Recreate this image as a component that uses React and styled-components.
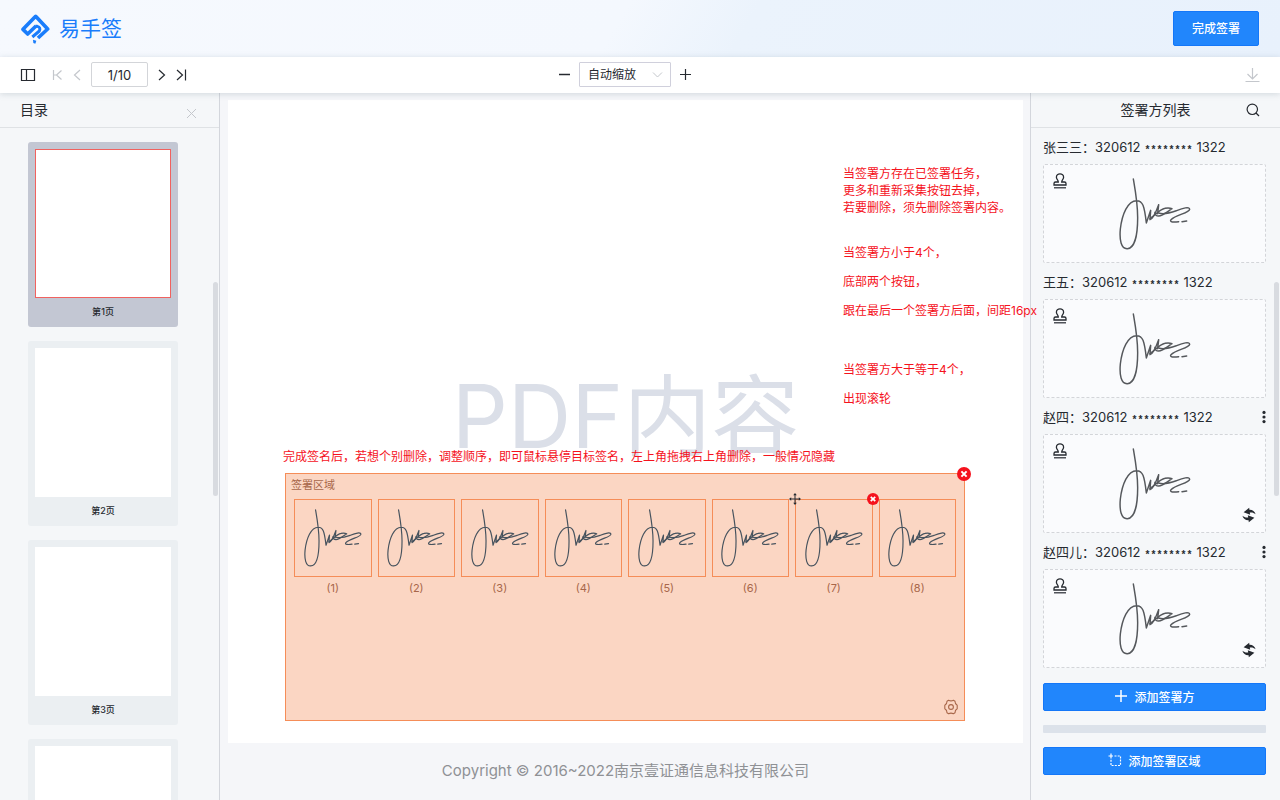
import React from 'react';
import styled, { createGlobalStyle, css } from 'styled-components';

const pages = [1, 2, 3, 4];

const signers = [
  { name: '张三三', locked: true },
  { name: '王五', locked: true },
  { name: '赵四', locked: false },
  { name: '赵四儿', locked: false },
];

const signatures = [1, 2, 3, 4, 5, 6, 7, 8];

const GlobalStyle = createGlobalStyle`
  * {
    box-sizing: border-box;
  }

  body {
    margin: 0;
    font-family: Inter, "Noto Sans CJK SC", sans-serif;
    font-size: 12px;
    color: #262a30;
    background: #f5f6f9;
  }

  button, input, select {
    font-family: inherit;
    color: inherit;
  }

  h1, h2, p, ul, ol {
    margin: 0;
    padding: 0;
    list-style: none;
  }
`;

const Layout = styled.div`
  display: flex;
  flex-direction: column;
  height: 100vh;
  overflow: hidden;
`;

const Header = styled.header`
  display: flex;
  align-items: center;
  justify-content: space-between;
  flex: none;
  height: 57px;
  padding: 0 21px;
  background: linear-gradient(120deg, #f6f9fe 0%, #f4f8fe 48%, #ebf3fc 58%, #e8f1fc 100%);
`;

const Brand = styled.a`
  display: flex;
  align-items: center;
  gap: 9px;
  color: #1a7dfb;
  font-size: 21px;
  line-height: 28px;
  text-decoration: none;
`;

const PrimaryButton = styled.button`
  display: flex;
  align-items: center;
  justify-content: center;
  gap: 6px;
  height: ${props => (props.$large ? '35px' : '28px')};
  padding: 0 18px 2px;
  border: 1px solid #1477f8;
  border-radius: 2px;
  background: #2186fc;
  color: #fff;
  font-size: 12px;
  font-weight: 500;
  cursor: pointer;
`;

const Toolbar = styled.div`
  display: grid;
  grid-template-columns: 220px 1fr 250px;
  align-items: center;
  flex: none;
  position: relative;
  z-index: 3;
  height: 36px;
  background: #fff;
  box-shadow: 0 1px 6px rgba(120, 135, 150, .28);
`;

const ToolGroup = styled.div`
  display: flex;
  align-items: center;
  justify-content: ${props => props.$align || 'flex-start'};
  gap: 8px;
  padding: 0 20px 1px;
`;

const IconButton = styled.button`
  display: flex;
  align-items: center;
  justify-content: center;
  padding: 0;
  border: 0;
  background: none;
  color: ${props => (props.disabled ? '#c4c7cc' : '#262a30')};
  cursor: pointer;

  svg {
    display: block;
  }
`;

const Pager = styled.div`
  display: flex;
  align-items: center;
  gap: 10px;
  margin-left: 8px;
`;

const PageInput = styled.input`
  width: 57px;
  height: 25px;
  padding: 0;
  border: 1px solid #d3d5d9;
  border-radius: 2px;
  background: #fff;
  font-size: 13px;
  text-align: center;
`;

const SelectBox = styled.div`
  display: grid;
  align-items: center;
  width: 92px;

  > * {
    grid-area: 1 / 1;
  }

  svg {
    justify-self: end;
    margin-right: 8px;
    pointer-events: none;
  }
`;

const ScaleSelect = styled.select`
  width: 100%;
  height: 25px;
  padding: 0 8px;
  border: 1px solid #d0d0dc;
  border-radius: 1px;
  background: #fff;
  font-size: 12px;
  appearance: none;
`;

const Body = styled.div`
  display: grid;
  grid-template-columns: 220px 1fr 250px;
  flex: 1;
  min-height: 0;
`;

const Panel = styled.aside`
  position: relative;
  display: flex;
  flex-direction: column;
  min-height: 0;
  overflow: hidden;
  background: #f5f7f9;
  ${props => (props.$side === 'left'
    ? css`border-right: 1px solid #d3d6dc;`
    : css`border-left: 1px solid #d3d6dc;`)}
`;

const PanelHeader = styled.div`
  display: grid;
  grid-template-columns: ${props => (props.$centered ? '1fr auto 1fr' : 'auto 1fr')};
  align-items: center;
  flex: none;
  height: 35px;
  padding: 0 20px;
  border-bottom: 1px solid #dfe2e5;

  ${IconButton} {
    justify-self: end;
  }
`;

const PanelTitle = styled.h2`
  grid-column: ${props => (props.$centered ? 2 : 1)};
  padding-bottom: 2px;
  font-size: 14px;
  font-weight: 400;
`;

const Scrollbar = styled.div`
  position: absolute;
  top: 189px;
  right: 1px;
  width: 5px;
  height: 214px;
  border-radius: 3px;
  background: #d8dbe0;
`;

const PageList = styled.ol`
  && {
    display: flex;
    flex-direction: column;
    gap: 14px;
    flex: 1;
    min-height: 0;
    padding: 14px 41px 14px 28px;
    overflow-y: auto;
    scrollbar-width: none;
  }
`;

const Thumb = styled.li`
  display: flex;
  flex-direction: column;
  flex: none;
  padding: 7px;
  border-radius: 3px;
  background: ${props => (props.$active ? '#c3c7d3' : '#ebeff2')};
  font-size: 9px;
  font-weight: 500;
  line-height: 28px;
  text-align: center;
`;

const ThumbPage = styled.div`
  height: 149px;
  border: 1px solid ${props => (props.$active ? '#f0625f' : '#fff')};
  background: #fff;
`;

const ThumbLabel = styled.span`
  height: 22px;
`;

const Main = styled.main`
  position: relative;
  z-index: 1;
  display: flex;
  flex-direction: column;
  min-width: 0;
  padding: 7px 7px 0 8px;
`;

const Sheet = styled.section`
  position: relative;
  display: flex;
  align-items: center;
  justify-content: center;
  flex: 1;
  padding-bottom: 12px;
  background: #fff;
`;

const Watermark = styled.div`
  color: #dbdfe8;
  font-size: 88px;
  font-weight: 400;
  line-height: 100px;
  white-space: nowrap;
`;

const Notes = styled.div`
  position: absolute;
  top: 65px;
  left: 615px;
  display: flex;
  flex-direction: column;
  gap: 22px;
  color: #f5121d;
  white-space: nowrap;
`;

const Note = styled.p`
  && {
    padding-bottom: ${props => (props.$loose ? '8px' : '0')};
  }
  line-height: ${props => (props.$loose ? '29px' : '17px')};
`;

const SignArea = styled.div`
  position: absolute;
  right: 58px;
  bottom: 22px;
  left: 57px;
  height: 248px;
  padding: 4px 8px;
  border: 1px solid #f58d58;
  background: #fbd6c3;
  color: #a8674a;
  font-size: 11px;
`;

const AreaHint = styled.p`
  && {
    padding-bottom: 8px;
  }
  position: absolute;
  bottom: 100%;
  left: -3px;
  color: #f5121d;
  font-size: 12px;
  line-height: 18px;
  white-space: nowrap;
`;

const AreaTitle = styled.p`
  && {
    margin: 0 0 6px -3px;
  }
  line-height: 15px;
`;

const SignGrid = styled.ol`
  display: grid;
  grid-template-columns: repeat(8, 1fr);
  gap: 6px;
`;

const SignItem = styled.li`
  position: relative;
  line-height: 22px;
  text-align: center;
`;

const SignFrame = styled.div`
  display: flex;
  align-items: center;
  justify-content: center;
  height: 78px;
  border: 1px solid #f58d58;
  color: #47535e;
`;

const CornerButton = styled(IconButton)`
  position: absolute;
  top: ${props => (props.$size / -2)}px;
  ${props => props.$corner}: ${props => (props.$size / -2)}px;
  width: ${props => props.$size}px;
  height: ${props => props.$size}px;
`;

const SettingsButton = styled(IconButton)`
  position: absolute;
  right: 6px;
  bottom: 5px;
  color: #a8674a;
`;

const Footer = styled.footer`
  flex: none;
  height: 57px;
  color: #8f9195;
  font-size: 15px;
  line-height: 56px;
  text-align: center;
`;

const SignerList = styled.ul`
  && {
    padding: 8px 14px 15px 12px;
  }
  display: flex;
  flex-direction: column;
  gap: 8px;
`;

const SignerHead = styled.div`
  display: flex;
  align-items: center;
  justify-content: space-between;
  height: 22px;
  margin-bottom: 6px;
  font-size: 13px;
  white-space: nowrap;
`;

const SignerId = styled.span`
  line-height: 22px;
`;

const Mask = styled.span`
  margin: 0 4px;
  font-family: "Liberation Mono", monospace;
  font-size: 10px;
  font-weight: 700;
  line-height: 10px;
  vertical-align: -1px;
`;

const SignerCard = styled.div`
  position: relative;
  display: flex;
  align-items: center;
  justify-content: center;
  height: 99px;
  border: 1px dashed #d3d5d9;
  border-radius: 2px;
  background: #fafbfd;
  color: #55585c;
`;

const CardIcon = styled(IconButton)`
  position: absolute;
  ${props => (props.$place === 'top'
    ? css`top: 8px; left: 9px;`
    : css`right: 9px; bottom: 9px;`)}
`;

const Actions = styled.div`
  display: flex;
  flex-direction: column;
  gap: 14px;
  padding: 0 14px 0 12px;
`;

const Divider = styled.div`
  height: 8px;
  border-radius: 1px;
  background: #dce2ea;
`;

function Icon({ width = 14, height = 14, box, children, strokeWidth = 1.2 }) {
  return (
    <svg
      width={width}
      height={height}
      viewBox={box || `0 0 ${width} ${height}`}
      fill="none"
      stroke="currentColor"
      strokeWidth={strokeWidth}
      aria-hidden="true"
    >
      {children}
    </svg>
  );
}

function Logo() {
  return (
    <Icon width={29} height={30} box="63 40 87 90" strokeWidth={11}>
      <g strokeLinejoin="round">
        <path d="M114 112 L143 85 L107 47 L69 86 L83 100 L108 76" />
        <path d="M106 77 L112 77 Q123 80 118 91 L97 109" strokeWidth="9" />
        <path d="M99 117 L109 120 L106 129 L100 127 Z" fill="currentColor" stroke="none" />
      </g>
    </Icon>
  );
}

function Signature({ size }) {
  return (
    <Icon width={size} height={size} box="28 24 216 214" strokeWidth={4.4}>
      <g strokeLinecap="round" strokeLinejoin="round">
        <path d="M71 26 C76 55 84 98 84 142 C84 190 76 234 53 235 C34 236 29 208 32 176 C37 132 54 91 81 91 C99 91 104 106 110 158 L123 120 L121 148 C128 146 138 128 147 103 L144 130" />
        <path d="M121 144 C134 138 148 118 166 114 C174 112 182 113 187 115 C177 121 159 137 147 137 C140 137 134 132 136 126" />
        <path d="M147 128 C165 134 184 127 201 121 C220 113 239 108 240 117 C238 128 200 133 184 148 C178 156 193 156 207 154 M217 154 L231 152" />
      </g>
    </Icon>
  );
}

function Stamp() {
  return (
    <Icon width={14} height={16}>
      <path d="M5.3 9 C5.3 6.8 3.4 6.4 3.4 4.2 A3.6 3.4 0 0 1 10.6 4.2 C10.6 6.4 8.7 6.8 8.7 9 H11.4 Q13 9 13 10.4 V12 H1 V10.4 Q1 9 2.6 9 Z" strokeWidth="1.3" />
      <path d="M1 14.8 H13" />
    </Icon>
  );
}

function Recollect() {
  return (
    <Icon width={14} height={16}>
      <g fill="currentColor" stroke="none">
        <path d="M1.6 5.2 L7.2 .8 L7.4 2.8 C10.4 2.6 12.6 4.2 13.6 7.2 C11.6 5.6 9.8 5.2 7.8 5.6 L8.2 7.8 Z" />
        <path d="M12.4 10.8 L6.8 15.2 L6.6 13.2 C3.6 13.4 1.4 11.8 .4 8.8 C2.4 10.4 4.2 10.8 6.2 10.4 L5.8 8.2 Z" />
      </g>
    </Icon>
  );
}

function RemoveIcon({ size }) {
  return (
    <Icon width={size} height={size} box="0 0 14 14">
      <circle cx="7" cy="7" r="7" fill="#f5121d" stroke="none" />
      <path d="M4.4 4.4 L9.6 9.6 M9.6 4.4 L4.4 9.6" stroke="#fff" strokeWidth="2" />
    </Icon>
  );
}

function MoveIcon() {
  return (
    <Icon width={14} height={14} box="0 0 12 12" strokeWidth={1}>
      <path d="M6 1 V11 M1 6 H11" />
      <path d="M6 0 L7.8 2.2 H4.2 Z M6 12 L7.8 9.8 H4.2 Z M0 6 L2.2 4.2 V7.8 Z M12 6 L9.8 4.2 V7.8 Z" fill="currentColor" stroke="none" />
    </Icon>
  );
}

function Signer({ signer }) {
  return (
    <li>
      <SignerHead>
        <SignerId>
          {signer.name}：320612
          <Mask>********</Mask>
          1322
        </SignerId>
        {!signer.locked && (
          <IconButton aria-label="更多">
            <Icon width={4} height={14}>
              <g fill="currentColor" stroke="none">
                <circle cx="2" cy="2.4" r="1.6" />
                <circle cx="2" cy="7" r="1.6" />
                <circle cx="2" cy="11.6" r="1.6" />
              </g>
            </Icon>
          </IconButton>
        )}
      </SignerHead>
      <SignerCard>
        <CardIcon $place="top" aria-label="签章"><Stamp /></CardIcon>
        <Signature size={72} />
        {!signer.locked && (
          <CardIcon $place="bottom" aria-label="重新采集"><Recollect /></CardIcon>
        )}
      </SignerCard>
    </li>
  );
}

function App() {
  return (
    <Layout>
      <GlobalStyle />
      <Header>
        <Brand href="#"><Logo />易手签</Brand>
        <PrimaryButton $large>完成签署</PrimaryButton>
      </Header>

      <Toolbar>
        <ToolGroup>
          <IconButton aria-label="目录">
            <Icon width={16} height={14}>
              <path d="M1.5 1.5 H14.5 V12.5 H1.5 Z M6.5 1.5 V12.5" />
            </Icon>
          </IconButton>
          <Pager>
            <IconButton disabled aria-label="第一页">
              <Icon width={11} height={12}><path d="M1.5 1 V11 M9.5 1.5 L4.5 6 L9.5 10.5 M2 6 H4" /></Icon>
            </IconButton>
            <IconButton disabled aria-label="上一页">
              <Icon width={8} height={12}><path d="M7 1 L1.5 6 L7 11" /></Icon>
            </IconButton>
            <PageInput aria-label="页码" defaultValue="1/10" />
            <IconButton aria-label="下一页">
              <Icon width={8} height={12}><path d="M1 1 L6.5 6 L1 11" /></Icon>
            </IconButton>
            <IconButton aria-label="最后一页">
              <Icon width={11} height={12}><path d="M1 1 L6.5 6 L1 11 M9.5 .5 V11.5" /></Icon>
            </IconButton>
          </Pager>
        </ToolGroup>
        <ToolGroup $align="center">
          <IconButton aria-label="缩小">
            <Icon width={13} height={13}><path d="M1 6.5 H12" strokeWidth="1.5" /></Icon>
          </IconButton>
          <SelectBox>
            <ScaleSelect aria-label="缩放" defaultValue="auto">
              <option value="auto">自动缩放</option>
              <option value="100">100%</option>
            </ScaleSelect>
            <Icon width={11} height={8}><path d="M1 1.5 L5.5 6 L10 1.5" stroke="#c4c7cc" strokeWidth="1" /></Icon>
          </SelectBox>
          <IconButton aria-label="放大">
            <Icon width={13} height={13}><path d="M1 6.5 H12 M6.5 1 V12" /></Icon>
          </IconButton>
        </ToolGroup>
        <ToolGroup $align="flex-end">
          <IconButton disabled aria-label="下载">
            <Icon width={15} height={16}><path d="M7.5 1 V11 M2.5 7 L7.5 12 L12.5 7 M.5 14.5 H14.5" /></Icon>
          </IconButton>
        </ToolGroup>
      </Toolbar>

      <Body>
        <Panel $side="left">
          <PanelHeader>
            <PanelTitle>目录</PanelTitle>
            <IconButton disabled aria-label="关闭">
              <Icon width={13} height={18}><path d="M1 8 L10 17 M10 8 L1 17" strokeWidth="1" /></Icon>
            </IconButton>
          </PanelHeader>
          <PageList>
            {pages.map(page => (
              <Thumb key={page} $active={page === 1}>
                <ThumbPage $active={page === 1} />
                <ThumbLabel>第{page}页</ThumbLabel>
              </Thumb>
            ))}
          </PageList>
          <Scrollbar />
        </Panel>

        <Main>
          <Sheet>
            <Watermark>PDF内容</Watermark>
            <SignArea>
              <AreaHint>完成签名后，若想个别删除，调整顺序，即可鼠标悬停目标签名，左上角拖拽右上角删除，一般情况隐藏</AreaHint>
              <AreaTitle>签署区域</AreaTitle>
              <SignGrid>
                {signatures.map(number => (
                  <SignItem key={number}>
                    <SignFrame><Signature size={58} /></SignFrame>
                    ({number})
                    {number === 7 && (
                      <>
                        <CornerButton $size={12} $corner="left" aria-label="移动"><MoveIcon /></CornerButton>
                        <CornerButton $size={12} $corner="right" aria-label="删除签名"><RemoveIcon size={12} /></CornerButton>
                      </>
                    )}
                  </SignItem>
                ))}
              </SignGrid>
              <CornerButton $size={14} $corner="right" aria-label="删除区域"><RemoveIcon size={14} /></CornerButton>
              <SettingsButton aria-label="设置">
                <Icon width={14} height={16} strokeWidth={1.1}>
                  <path d="M4.6 1.2 Q7 2.6 9.4 1.2 L11 2.2 Q10.9 5 13.2 6.2 V9.8 Q10.9 11 11 13.8 L9.4 14.8 Q7 13.4 4.6 14.8 L3 13.8 Q3.1 11 .8 9.8 V6.2 Q3.1 5 3 2.2 Z" strokeLinejoin="round" />
                  <circle cx="7" cy="8" r="2.4" />
                </Icon>
              </SettingsButton>
            </SignArea>
            <Notes>
              <Note>
                当签署方存在已签署任务，<br />
                更多和重新采集按钮去掉，<br />
                若要删除，须先删除签署内容。
              </Note>
              <Note $loose>
                当签署方小于4个，<br />
                底部两个按钮，<br />
                跟在最后一个签署方后面，间距16px
              </Note>
              <Note $loose>
                当签署方大于等于4个，<br />
                出现滚轮
              </Note>
            </Notes>
          </Sheet>
          <Footer>Copyright © 2016~2022南京壹证通信息科技有限公司</Footer>
        </Main>

        <Panel $side="right">
          <PanelHeader $centered>
            <PanelTitle $centered>签署方列表</PanelTitle>
            <IconButton aria-label="搜索">
              <Icon><path d="M10 10 L13 13" /><circle cx="6.3" cy="6.3" r="5.2" /></Icon>
            </IconButton>
          </PanelHeader>
          <SignerList>
            {signers.map(signer => <Signer key={signer.name} signer={signer} />)}
          </SignerList>
          <Actions>
            <PrimaryButton>
              <Icon width={14} height={14}><path d="M1 7 H13 M7 1 V13" strokeWidth="1.5" /></Icon>
              添加签署方
            </PrimaryButton>
            <Divider />
            <PrimaryButton>
              <Icon width={14} height={14}>
                <path d="M.5 3 H5 M3 .5 V5" />
                <path d="M6.5 3 H12.5 V12.5 H3 V5" strokeDasharray="2 1.2" />
              </Icon>
              添加签署区域
            </PrimaryButton>
          </Actions>
          <Scrollbar />
        </Panel>
      </Body>
    </Layout>
  );
}

export default App;
